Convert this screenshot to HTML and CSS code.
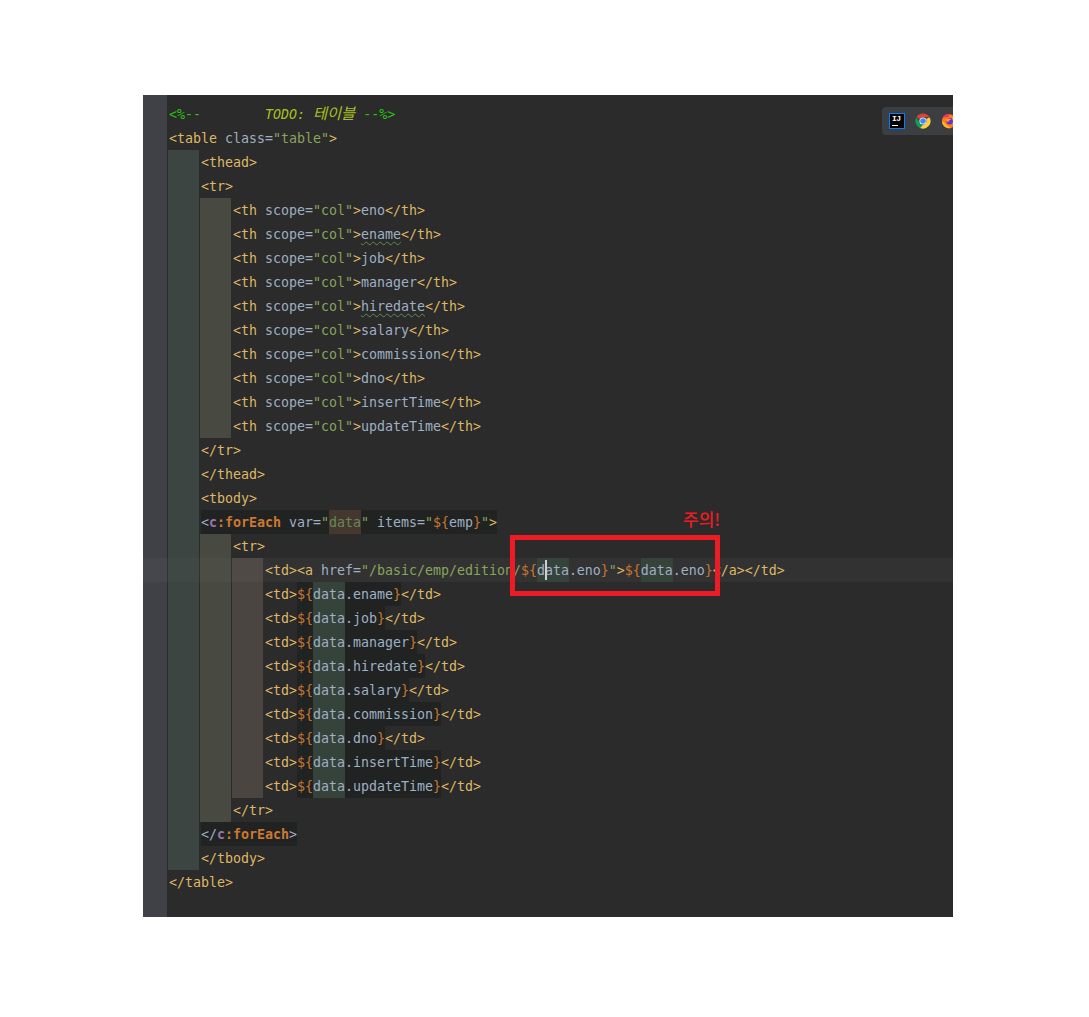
FILE: index.html
```html
<!DOCTYPE html>
<html lang="ko">
<head>
<meta charset="utf-8">
<title>Editor</title>
<link rel="stylesheet" href="styles.css">
</head>
<body>
<main class="editor">
  <div class="line pad-top"><span class="gut"></span></div>
  <div class="line"><span class="gut"></span><code class="code"><span class="cm">&lt;%--        </span><span class="todo">TODO: <span class="ko">테이블</span></span><span class="cm"> --%&gt;</span></code></div>
  <div class="line"><span class="gut"></span><code class="code"><span class="t">&lt;table</span> <span class="a">class=</span><span class="s">"table"</span><span class="t">&gt;</span></code></div>
  <div class="line"><span class="gut"></span><span class="ind i1"></span><code class="code"><span class="t">&lt;thead&gt;</span></code></div>
  <div class="line"><span class="gut"></span><span class="ind i1"></span><code class="code"><span class="t">&lt;tr&gt;</span></code></div>
  <div class="line"><span class="gut"></span><span class="ind i1"></span><span class="ind i2"></span><code class="code"><span class="t">&lt;th</span> <span class="a">scope=</span><span class="s">"col"</span><span class="t">&gt;</span><span class="x">eno</span><span class="t">&lt;/th&gt;</span></code></div>
  <div class="line"><span class="gut"></span><span class="ind i1"></span><span class="ind i2"></span><code class="code"><span class="t">&lt;th</span> <span class="a">scope=</span><span class="s">"col"</span><span class="t">&gt;</span><span class="x typo">ename</span><span class="t">&lt;/th&gt;</span></code></div>
  <div class="line"><span class="gut"></span><span class="ind i1"></span><span class="ind i2"></span><code class="code"><span class="t">&lt;th</span> <span class="a">scope=</span><span class="s">"col"</span><span class="t">&gt;</span><span class="x">job</span><span class="t">&lt;/th&gt;</span></code></div>
  <div class="line"><span class="gut"></span><span class="ind i1"></span><span class="ind i2"></span><code class="code"><span class="t">&lt;th</span> <span class="a">scope=</span><span class="s">"col"</span><span class="t">&gt;</span><span class="x">manager</span><span class="t">&lt;/th&gt;</span></code></div>
  <div class="line"><span class="gut"></span><span class="ind i1"></span><span class="ind i2"></span><code class="code"><span class="t">&lt;th</span> <span class="a">scope=</span><span class="s">"col"</span><span class="t">&gt;</span><span class="x typo">hiredate</span><span class="t">&lt;/th&gt;</span></code></div>
  <div class="line"><span class="gut"></span><span class="ind i1"></span><span class="ind i2"></span><code class="code"><span class="t">&lt;th</span> <span class="a">scope=</span><span class="s">"col"</span><span class="t">&gt;</span><span class="x">salary</span><span class="t">&lt;/th&gt;</span></code></div>
  <div class="line"><span class="gut"></span><span class="ind i1"></span><span class="ind i2"></span><code class="code"><span class="t">&lt;th</span> <span class="a">scope=</span><span class="s">"col"</span><span class="t">&gt;</span><span class="x">commission</span><span class="t">&lt;/th&gt;</span></code></div>
  <div class="line"><span class="gut"></span><span class="ind i1"></span><span class="ind i2"></span><code class="code"><span class="t">&lt;th</span> <span class="a">scope=</span><span class="s">"col"</span><span class="t">&gt;</span><span class="x">dno</span><span class="t">&lt;/th&gt;</span></code></div>
  <div class="line"><span class="gut"></span><span class="ind i1"></span><span class="ind i2"></span><code class="code"><span class="t">&lt;th</span> <span class="a">scope=</span><span class="s">"col"</span><span class="t">&gt;</span><span class="x">insertTime</span><span class="t">&lt;/th&gt;</span></code></div>
  <div class="line"><span class="gut"></span><span class="ind i1"></span><span class="ind i2"></span><code class="code"><span class="t">&lt;th</span> <span class="a">scope=</span><span class="s">"col"</span><span class="t">&gt;</span><span class="x">updateTime</span><span class="t">&lt;/th&gt;</span></code></div>
  <div class="line"><span class="gut"></span><span class="ind i1"></span><code class="code"><span class="t">&lt;/tr&gt;</span></code></div>
  <div class="line"><span class="gut"></span><span class="ind i1"></span><code class="code"><span class="t">&lt;/thead&gt;</span></code></div>
  <div class="line"><span class="gut"></span><span class="ind i1"></span><code class="code"><span class="t">&lt;tbody&gt;</span></code></div>
  <div class="line"><span class="gut"></span><span class="ind i1"></span><code class="code"><span class="match"><span class="x">&lt;</span><span class="ns">c</span><span class="fe">:forEach</span> <span class="a">var=</span><span class="s">"</span><span class="s decl">data</span><span class="s">"</span> <span class="a">items=</span><span class="s">"</span><span class="el">${</span><span class="x">emp</span><span class="el">}</span><span class="s">"</span><span class="t">&gt;</span></span></code></div>
  <div class="line"><span class="gut"></span><span class="ind i1"></span><span class="ind i2"></span><code class="code"><span class="t">&lt;tr&gt;</span></code></div>
  <div class="line current"><span class="gut"></span><span class="ind i1"></span><span class="ind i2"></span><span class="ind i3"></span><code class="code"><span class="t">&lt;td&gt;&lt;a</span> <span class="a">href=</span><span class="s">"/basic/emp/edition/</span><span class="el">${</span><span class="use caret-host">data<span class="caret"></span></span><span class="x">.eno</span><span class="el">}</span><span class="s">"</span><span class="t">&gt;</span><span class="el">${</span><span class="use">data</span><span class="x">.eno</span><span class="el">}</span><span class="t">&lt;/a&gt;&lt;/td&gt;</span></code></div>
  <div class="line"><span class="gut"></span><span class="ind i1"></span><span class="ind i2"></span><span class="ind i3"></span><code class="code"><span class="t">&lt;td&gt;</span><span class="match"><span class="el">${</span><span class="use">data</span><span class="x">.ename</span><span class="el">}</span></span><span class="t">&lt;/td&gt;</span></code></div>
  <div class="line"><span class="gut"></span><span class="ind i1"></span><span class="ind i2"></span><span class="ind i3"></span><code class="code"><span class="t">&lt;td&gt;</span><span class="match"><span class="el">${</span><span class="use">data</span><span class="x">.job</span><span class="el">}</span></span><span class="t">&lt;/td&gt;</span></code></div>
  <div class="line"><span class="gut"></span><span class="ind i1"></span><span class="ind i2"></span><span class="ind i3"></span><code class="code"><span class="t">&lt;td&gt;</span><span class="match"><span class="el">${</span><span class="use">data</span><span class="x">.manager</span><span class="el">}</span></span><span class="t">&lt;/td&gt;</span></code></div>
  <div class="line"><span class="gut"></span><span class="ind i1"></span><span class="ind i2"></span><span class="ind i3"></span><code class="code"><span class="t">&lt;td&gt;</span><span class="match"><span class="el">${</span><span class="use">data</span><span class="x">.hiredate</span><span class="el">}</span></span><span class="t">&lt;/td&gt;</span></code></div>
  <div class="line"><span class="gut"></span><span class="ind i1"></span><span class="ind i2"></span><span class="ind i3"></span><code class="code"><span class="t">&lt;td&gt;</span><span class="match"><span class="el">${</span><span class="use">data</span><span class="x">.salary</span><span class="el">}</span></span><span class="t">&lt;/td&gt;</span></code></div>
  <div class="line"><span class="gut"></span><span class="ind i1"></span><span class="ind i2"></span><span class="ind i3"></span><code class="code"><span class="t">&lt;td&gt;</span><span class="match"><span class="el">${</span><span class="use">data</span><span class="x">.commission</span><span class="el">}</span></span><span class="t">&lt;/td&gt;</span></code></div>
  <div class="line"><span class="gut"></span><span class="ind i1"></span><span class="ind i2"></span><span class="ind i3"></span><code class="code"><span class="t">&lt;td&gt;</span><span class="match"><span class="el">${</span><span class="use">data</span><span class="x">.dno</span><span class="el">}</span></span><span class="t">&lt;/td&gt;</span></code></div>
  <div class="line"><span class="gut"></span><span class="ind i1"></span><span class="ind i2"></span><span class="ind i3"></span><code class="code"><span class="t">&lt;td&gt;</span><span class="match"><span class="el">${</span><span class="use">data</span><span class="x">.insertTime</span><span class="el">}</span></span><span class="t">&lt;/td&gt;</span></code></div>
  <div class="line"><span class="gut"></span><span class="ind i1"></span><span class="ind i2"></span><span class="ind i3"></span><code class="code"><span class="t">&lt;td&gt;</span><span class="match"><span class="el">${</span><span class="use">data</span><span class="x">.updateTime</span><span class="el">}</span></span><span class="t">&lt;/td&gt;</span></code></div>
  <div class="line"><span class="gut"></span><span class="ind i1"></span><span class="ind i2"></span><code class="code"><span class="t">&lt;/tr&gt;</span></code></div>
  <div class="line"><span class="gut"></span><span class="ind i1"></span><code class="code"><span class="match"><span class="x">&lt;/</span><span class="ns">c</span><span class="fe">:forEach</span><span class="x">&gt;</span></span></code></div>
  <div class="line"><span class="gut"></span><span class="ind i1"></span><code class="code"><span class="t">&lt;/tbody&gt;</span></code></div>
  <div class="line"><span class="gut"></span><code class="code"><span class="t">&lt;/table&gt;</span></code></div>
  <div class="line pad-bottom"><span class="gut"></span></div>

  <div class="browsers">
    <span class="ij"><span class="ij-text">IJ</span><span class="ij-bar"></span></span>
    <svg class="browser" width="16" height="16" viewBox="0 0 16 16" aria-hidden="true">
      <path d="M8 .5A7.5 7.5 0 0 1 14.5 4.250L8 4.250A3.750 3.750 0 0 0 4.750 6.120L1.500 4.250A7.500 7.500 0 0 1 8 .5Z" fill="#db4437"/>
      <path d="M1.500 4.250L4.750 9.880A3.750 3.750 0 0 0 8 11.750L4.750 15A7.500 7.500 0 0 1 1.500 4.250Z" fill="#0f9d58"/>
      <path d="M14.500 4.250A7.500 7.500 0 0 1 5 14.900L8 11.750A3.750 3.750 0 0 0 11.250 6Z" fill="#ffcd40"/>
      <circle cx="8" cy="8" r="3.600" fill="#fff"/>
      <circle cx="8" cy="8" r="2.800" fill="#4285f4"/>
    </svg>
    <svg class="browser" width="16" height="16" viewBox="0 0 16 16" aria-hidden="true">
      <circle cx="8" cy="8.300" r="7" fill="#ff7a1a"/>
      <path d="M1 8.300A7 7 0 0 0 9 15.200C11 14.500 5 13 3.500 9.500Z" fill="#ffb52e"/>
      <path d="M1.500 5C2.500 2 5.500.5 9 1c-1 1-1.500 2-1.200 3C5.500 4 3.500 5 1.500 5Z" fill="#f2385a"/>
      <path d="M12 3.500C14.500 5 15 8 14.500 10.500L11 7Z" fill="#ffd43b"/>
      <circle cx="8.700" cy="8.300" r="3.200" fill="#6a2fd0"/>
      <path d="M5 6.500C6.500 5.200 8.800 5.200 10.300 6.700 8.500 6.700 7.500 7.700 7.500 9 6 9 5 8 5 6.500Z" fill="#ff9a2e"/>
    </svg>
  </div>
  <div class="warning">주의!</div>
  <div class="red-box"></div>
</main>
</body>
</html>
```
FILE: styles.css
```css
* {
  box-sizing: border-box;
}

html,
body {
  margin: 0;
  background: #fff;
}

body {
  padding: 95px 0 0 143px;
  height: 1017px;
  overflow: hidden;
}

.editor {
  position: relative;
  width: 810px;
  height: 822px;
  background: #2b2b2b;
  overflow: hidden;
  font-family: "DejaVu Sans Mono", "Noto Sans CJK KR", monospace;
  font-size: 13.29px;
  line-height: 24px;
}

.line {
  display: flex;
  height: 24px;
  white-space: pre;
}

.pad-top {
  height: 7px;
}

.pad-bottom {
  height: 23px;
}

.current {
  background: #323232;
}

.gut {
  flex: none;
  width: 24px;
  background: #404146;
}

.current .gut {
  background: #46474c;
}

.ind {
  flex: none;
  width: 31px;
  margin-left: 1px;
}

.i1 {
  background: #3c4541;
}

.i2 {
  background: #484a42;
}

.i3 {
  background: #4b4541;
}

.current .i1 {
  background: #3f4844;
}

.current .i2 {
  background: #4c4e46;
}

.current .i3 {
  background: #504a46;
}

.code {
  font: inherit;
  line-height: 26px;
  padding-left: 2px;
}

.t {
  color: #dfb766;
}

.a {
  color: #9fafc2;
}

.s {
  color: #8aa35c;
}

.x {
  color: #9fafc4;
}

.el {
  color: #c97530;
}

.cm {
  color: #27c412;
}

.todo {
  color: #a8c023;
  font-style: italic;
}

.ko {
  font-family: "Noto Sans CJK KR", sans-serif;
  font-size: 15.3px;
  line-height: 0;
}

.ns {
  color: #9876aa;
  font-weight: 700;
}

.fe {
  color: #cc7832;
  font-weight: 700;
}

.typo {
  text-decoration: underline wavy #5f8a55 1px;
  text-underline-offset: 2px;
}

.match {
  display: inline-block;
  height: 24px;
  background: #212322;
}

.use {
  display: inline-block;
  height: 24px;
  color: #9fafc4;
  background: #36433a;
}

.decl {
  display: inline-block;
  height: 24px;
  color: #6a8759;
  background: #44382e;
}

.caret-host {
  position: relative;
}

.caret {
  position: absolute;
  left: 8px;
  top: 2px;
  width: 2px;
  height: 20px;
  background: #c8d0d8;
}

.browsers {
  position: absolute;
  left: 739px;
  top: 12px;
  display: flex;
  align-items: center;
  gap: 10px;
  width: 90px;
  height: 28px;
  padding-left: 7px;
  background: #3c3f41;
  border-radius: 4px;
}

.ij {
  display: flex;
  flex: none;
  flex-direction: column;
  width: 16px;
  height: 16px;
  padding: 1px 0 0 2px;
  background: #000;
  border: 1px solid #087cfa;
}

.ij-text {
  color: #fff;
  font-family: "Liberation Mono", monospace;
  font-size: 8px;
  font-weight: 700;
  line-height: 8px;
  letter-spacing: -0.5px;
}

.ij-bar {
  width: 6px;
  height: 1px;
  margin-top: 2px;
  background: #fff;
}

.browser {
  flex: none;
}

.warning {
  position: absolute;
  left: 540px;
  top: 412px;
  color: #ed1c24;
  font-family: "Noto Sans CJK KR", sans-serif;
  font-size: 17px;
  font-weight: 500;
  line-height: 24px;
}

.red-box {
  position: absolute;
  left: 367px;
  top: 440px;
  width: 210px;
  height: 61px;
  border: 5px solid #ed1c24;
}
```
